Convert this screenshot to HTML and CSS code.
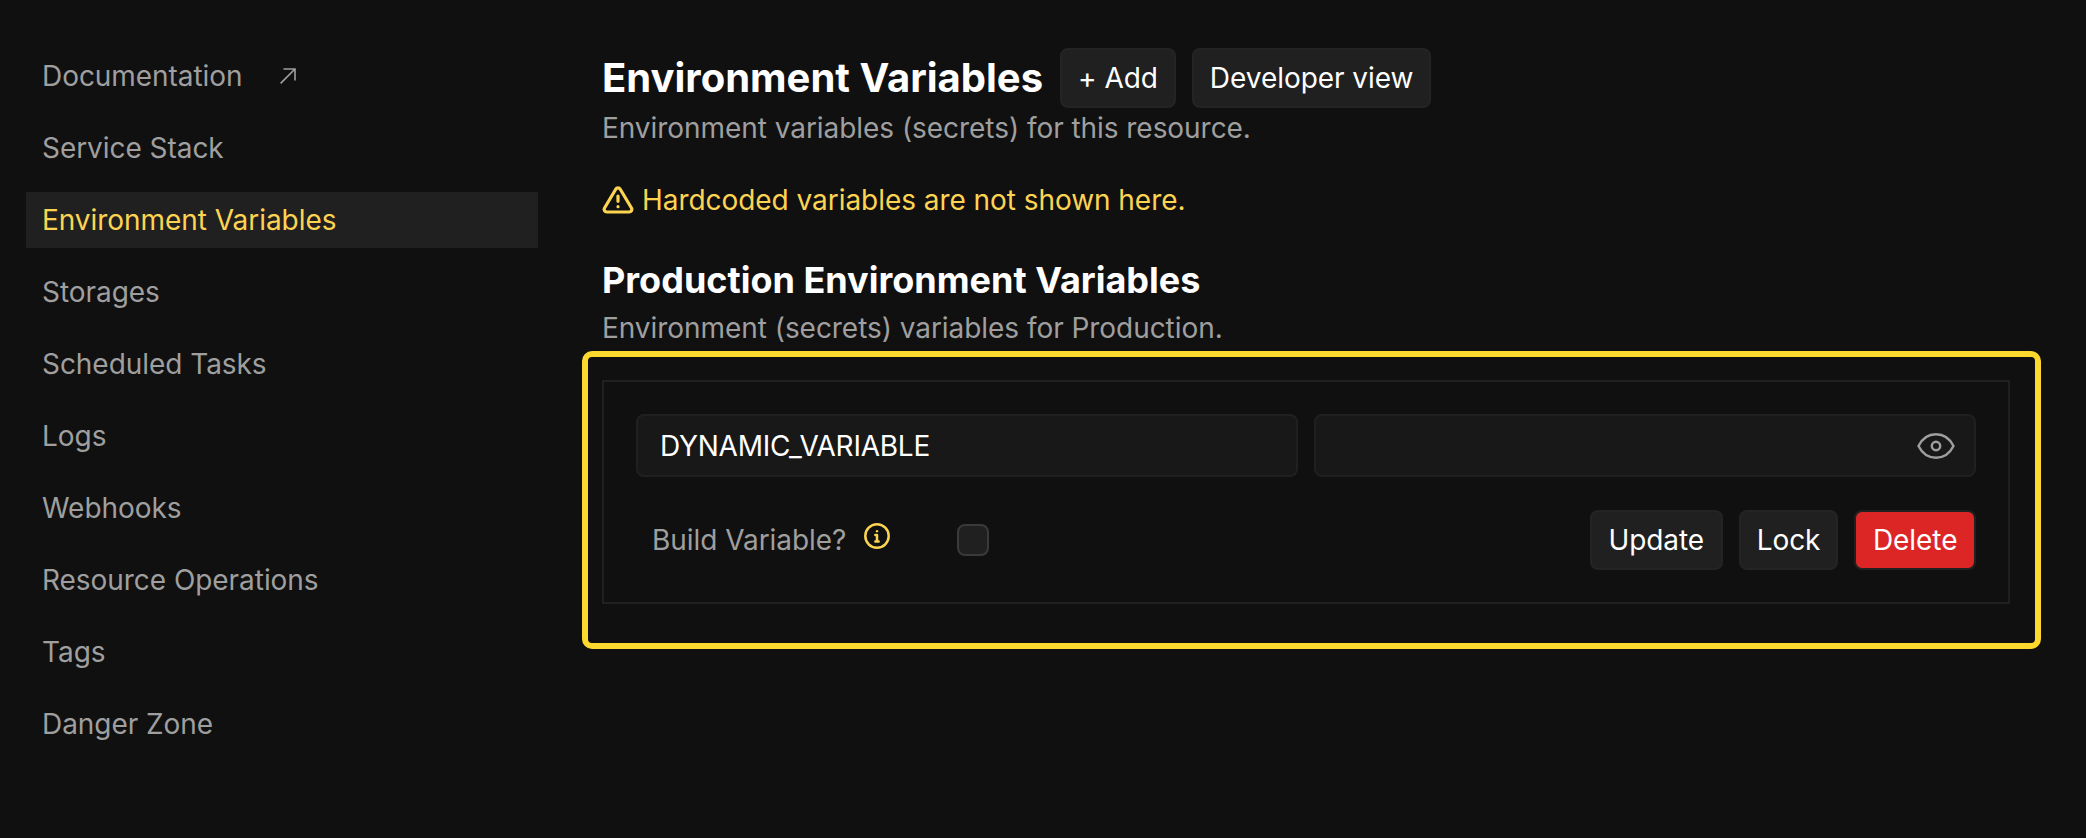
FILE: index.html
```html
<!DOCTYPE html>
<html lang="en">
<head>
<meta charset="utf-8">
<title>Environment Variables</title>
<link rel="stylesheet" href="styles.css">
</head>
<body>
<div class="layout">
  <nav class="sidebar">
    <a class="nav-item">Documentation
      <svg class="ext-icon" viewBox="0 0 16 16" fill="none" stroke="currentColor" stroke-width="1.6"><path d="M.6 15.4 15 1M3.5 1H15v11.5"/></svg>
    </a>
    <a class="nav-item">Service Stack</a>
    <a class="nav-item active">Environment Variables</a>
    <a class="nav-item">Storages</a>
    <a class="nav-item">Scheduled Tasks</a>
    <a class="nav-item">Logs</a>
    <a class="nav-item">Webhooks</a>
    <a class="nav-item">Resource Operations</a>
    <a class="nav-item">Tags</a>
    <a class="nav-item">Danger Zone</a>
  </nav>
  <main class="main">
    <div class="title-row">
      <h1 class="title">Environment Variables</h1>
      <button class="btn">+ Add</button>
      <button class="btn">Developer view</button>
    </div>
    <p class="subtitle">Environment variables (secrets) for this resource.</p>
    <div class="warning">
      <svg class="warn-icon" viewBox="0 0 24 24" fill="none" stroke="currentColor" stroke-width="2.4" stroke-linecap="round" stroke-linejoin="round"><path d="M12 9v4M12 17h.01M10.3 3.9 1.9 18a2 2 0 0 0 1.7 3h16.8a2 2 0 0 0 1.7-3L13.7 3.9a2 2 0 0 0-3.4 0z"/></svg>
      <span>Hardcoded variables are not shown here.</span>
    </div>
    <h2 class="section-title">Production Environment Variables</h2>
    <p class="section-sub">Environment (secrets) variables for Production.</p>
    <section class="card-wrap">
      <div class="highlight"></div>
      <div class="card">
        <div class="fields">
          <div class="field">DYNAMIC_VARIABLE</div>
          <div class="field field-secret">
            <svg class="eye-icon" viewBox="0 0 24 24" fill="none" stroke="currentColor" stroke-width="1.4" stroke-linecap="round" stroke-linejoin="round"><path d="M2 12C4 8 7.5 5.3 12 5.3S20 8 22 12C20 16 16.5 18.7 12 18.7S4 16 2 12z"/><circle cx="12" cy="12" r="2.4"/></svg>
          </div>
        </div>
        <div class="controls">
          <div class="build">
            <span class="build-label">Build Variable?</span>
            <svg class="info-icon" viewBox="0 0 24 24" fill="none" stroke="currentColor" stroke-width="2.3" stroke-linecap="round" stroke-linejoin="round"><circle cx="12" cy="12" r="10.8"/><path d="M10.5 11H12v6M10.5 17h3"/><circle cx="12" cy="7.5" r="1.1" fill="currentColor" stroke="none"/></svg>
            <span class="checkbox"></span>
          </div>
          <div class="actions">
            <button class="btn btn-update">Update</button>
            <button class="btn">Lock</button>
            <button class="btn btn-danger">Delete</button>
          </div>
        </div>
      </div>
    </section>
  </main>
</div>
</body>
</html>
```
FILE: styles.css
```css
* { box-sizing: border-box; }
html, body { margin: 0; height: 100%; }
body {
  background: #101010;
  color: #fff;
  font-family: Inter, "Liberation Sans", sans-serif;
  font-size: 28px;
  font-weight: 400;
  letter-spacing: -0.05px;
  overflow: hidden;
}
.layout { display: flex; padding: 48px 76px 0 26px; }
.sidebar { width: 512px; flex: none; display: flex; flex-direction: column; gap: 16px; }
.nav-item {
  height: 56px; display: flex; align-items: center; padding: 0 16px;
  color: #9f9f9f;
}
.nav-item.active { background: #202020; color: #fcd452; }
.ext-icon { width: 16px; height: 16px; margin-left: 37px; }
.main { margin-left: 64px; flex: 1; min-width: 0; }
.title-row { display: flex; align-items: center; gap: 16px; height: 60px; }
.title { margin: 0 1px 0 0; font-size: 40px; font-weight: 700; line-height: 60px; letter-spacing: 0; }
.btn {
  height: 60px; padding: 0 16px; border: 2px solid #242424; border-radius: 8px;
  background: #202020; color: #fff; font: inherit; letter-spacing: inherit; white-space: nowrap;
}
.btn-update { padding: 0 16.5px; }
.btn-danger { background: #dc2626; border-color: #202020; padding: 0 16.5px; }
.subtitle, .section-sub { margin: 0; color: #9f9f9f; line-height: 40px; }
.warning { display: flex; align-items: center; gap: 8px; margin-top: 32px; height: 40px; color: #fcd452; }
.warn-icon { width: 32px; height: 32px; flex: none; }
.section-title { margin: 40px 0 0; font-size: 36px; font-weight: 700; line-height: 40px; letter-spacing: 0; }
.section-sub { margin-top: 8px; }
.card-wrap { position: relative; margin-top: 32px; }
.highlight {
  position: absolute; top: -29px; left: -20px; right: -31px; bottom: -45px;
  border: 6px solid #fdd82f; border-radius: 10px; pointer-events: none;
}
.card { border: 2px solid #202020; padding: 32px; }
.fields { display: grid; grid-template-columns: 1fr 1fr; gap: 16px; }
.field {
  height: 63px; display: flex; align-items: center; padding: 0 22px;
  background: #181818; border: 2px solid #202020; border-radius: 8px; letter-spacing: -0.25px;
}
.field-secret { justify-content: flex-end; padding-right: 17px; }
.eye-icon { width: 42px; height: 42px; color: #9f9f9f; }
.controls { display: flex; align-items: center; justify-content: space-between; margin-top: 33px; }
.build { display: flex; align-items: center; padding-left: 16px; color: #9f9f9f; }
.build-label { width: 212px; }
.info-icon { width: 26px; height: 26px; color: #fcd452; margin-top: -8px; }
.checkbox {
  width: 32px; height: 32px; margin-left: 67px; border: 2px solid #3a3a3a; border-radius: 8px; background: #202020;
}
.actions { display: flex; gap: 16px; }
```
